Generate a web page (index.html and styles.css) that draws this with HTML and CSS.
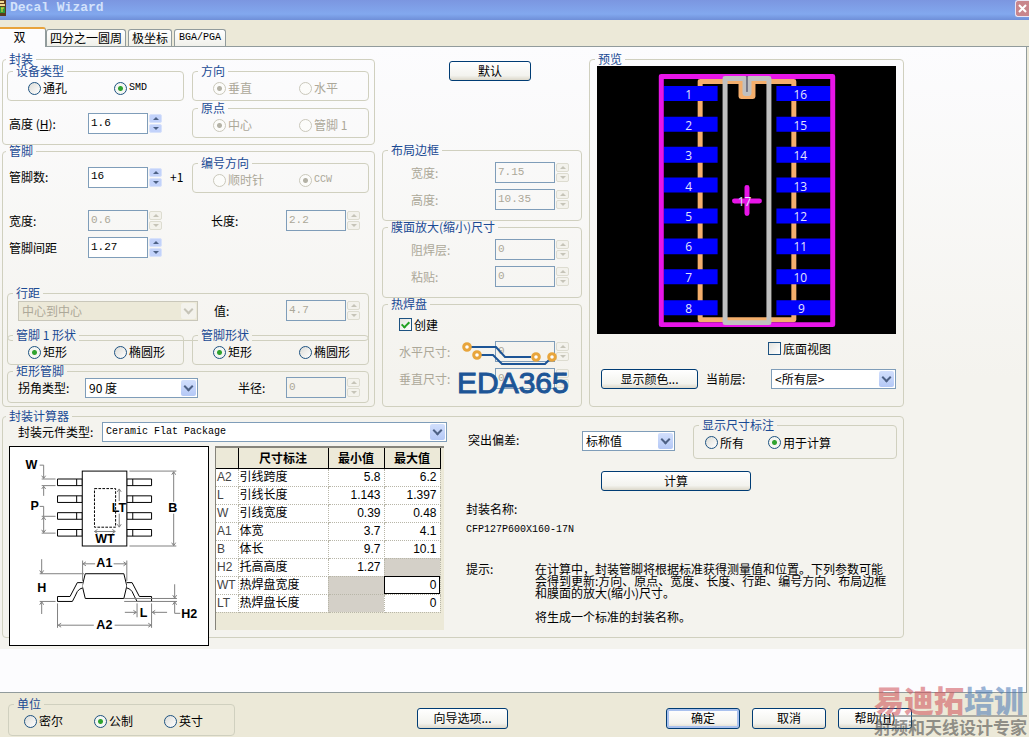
FILE: index.html
```
<!DOCTYPE html>
<html lang="zh-CN">
<head>
    <meta charset="UTF-8">
    <meta name="viewport" content="width=device-width, initial-scale=1">
    <title>Decal Wizard</title>
    <link rel="stylesheet" href="styles.css">
</head>
<body>
    <header class="titlebar">
        <svg class="app-icon" width="6" height="16" viewBox="0 0 6 16">
            <rect width="6" height="16" fill="#5b3a1c"/>
            <path d="M0 2h4M0 5h5" stroke="#f0d890" stroke-width="2"/>
            <rect y="7" width="5" height="6" fill="#2e9a3c"/>
            <path d="M1 8h3M2 8v4" stroke="#e8e040"/>
        </svg>
        <h1>Decal Wizard</h1>
        <button class="close" aria-label="关闭">
            <svg width="9" height="9" viewBox="0 0 9 9"><path d="M1 1L8 8M8 1L1 8" stroke="#fff" stroke-width="2"/></svg>
        </button>
    </header>

    <nav class="tabs" role="tablist">
        <button class="tab active" role="tab" aria-selected="true">双</button>
        <button class="tab" role="tab">四分之一圆周</button>
        <button class="tab" role="tab">极坐标</button>
        <button class="tab latin" role="tab">BGA/PGA</button>
    </nav>

    <main class="sheet">
        <div class="content">
            <div class="columns">
                <div class="col-left">
                    <fieldset class="outer package">
                        <legend>封装</legend>
                        <div class="halves">
                            <div>
                                <fieldset class="radios">
                                    <legend>设备类型</legend>
                                    <div class="options">
                                        <label><input type="radio" name="device">通孔</label>
                                        <label class="latin"><input type="radio" name="device" checked>SMD</label>
                                    </div>
                                </fieldset>
                                <div class="field height-row">
                                    <label for="height">高度 (<u>H</u>):</label>
                                    <span class="spin"><input type="text" id="height" value="1.6"><span class="arrows"><button class="up" aria-label="增加"></button><button class="down" aria-label="减少"></button></span></span>
                                </div>
                            </div>
                            <div class="stack">
                                <fieldset class="radios" disabled>
                                    <legend>方向</legend>
                                    <div class="options">
                                        <label><input type="radio" name="orient" checked>垂直</label>
                                        <label><input type="radio" name="orient">水平</label>
                                    </div>
                                </fieldset>
                                <fieldset class="radios" disabled>
                                    <legend>原点</legend>
                                    <div class="options">
                                        <label><input type="radio" name="origin" checked>中心</label>
                                        <label><input type="radio" name="origin">管脚 1</label>
                                    </div>
                                </fieldset>
                            </div>
                        </div>
                    </fieldset>

                    <fieldset class="outer pins">
                        <legend>管脚</legend>
                        <div class="halves">
                            <div class="field pin-count">
                                <label for="pins">管脚数:</label>
                                <span class="spin"><input type="text" id="pins" value="16"><span class="arrows"><button class="up" aria-label="增加"></button><button class="down" aria-label="减少"></button></span></span>
                                <span class="plus">+1</span>
                            </div>
                            <fieldset class="radios" disabled>
                                <legend>编号方向</legend>
                                <div class="options">
                                    <label><input type="radio" name="numbering">顺时针</label>
                                    <label class="latin"><input type="radio" name="numbering" checked>CCW</label>
                                </div>
                            </fieldset>
                        </div>
                        <div class="halves size-row">
                            <div class="field">
                                <label for="pin-width">宽度:</label>
                                <span class="spin"><input type="text" id="pin-width" value="0.6" disabled><span class="arrows"><button class="up" aria-label="增加" disabled></button><button class="down" aria-label="减少" disabled></button></span></span>
                            </div>
                            <div class="field second">
                                <label for="pin-length">长度:</label>
                                <span class="spin"><input type="text" id="pin-length" value="2.2" disabled><span class="arrows"><button class="up" aria-label="增加" disabled></button><button class="down" aria-label="减少" disabled></button></span></span>
                            </div>
                        </div>
                        <div class="field pitch-row">
                            <label for="pitch">管脚间距</label>
                            <span class="spin"><input type="text" id="pitch" value="1.27"><span class="arrows"><button class="up" aria-label="增加"></button><button class="down" aria-label="减少"></button></span></span>
                        </div>

                        <fieldset class="row-pitch">
                            <legend>行距</legend>
                            <div class="line">
                                <span class="combo off"><select aria-label="行距" disabled><option>中心到中心</option></select></span>
                                <label for="row-value">值:</label>
                                <span class="spin"><input type="text" id="row-value" value="4.7" disabled><span class="arrows"><button class="up" aria-label="增加" disabled></button><button class="down" aria-label="减少" disabled></button></span></span>
                            </div>
                        </fieldset>

                        <div class="halves shapes">
                            <fieldset class="radios">
                                <legend>管脚 1 形状</legend>
                                <div class="options">
                                    <label><input type="radio" name="shape1" checked>矩形</label>
                                    <label><input type="radio" name="shape1">椭圆形</label>
                                </div>
                            </fieldset>
                            <fieldset class="radios">
                                <legend>管脚形状</legend>
                                <div class="options">
                                    <label><input type="radio" name="shape" checked>矩形</label>
                                    <label><input type="radio" name="shape">椭圆形</label>
                                </div>
                            </fieldset>
                        </div>

                        <fieldset class="rect-pins">
                            <legend>矩形管脚</legend>
                            <div class="line">
                                <label for="corner">拐角类型:</label>
                                <span class="combo"><select id="corner"><option>90 度</option></select></span>
                                <label for="radius" class="radius">半径:</label>
                                <span class="spin"><input type="text" id="radius" value="0" disabled><span class="arrows"><button class="up" aria-label="增加" disabled></button><button class="down" aria-label="减少" disabled></button></span></span>
                            </div>
                        </fieldset>
                    </fieldset>
                </div>

                <div class="col-mid">
                    <button class="btn default">默认</button>
                    <fieldset class="dims" disabled>
                        <legend>布局边框</legend>
                        <div class="field">
                            <label for="court-w">宽度:</label>
                            <span class="spin"><input type="text" id="court-w" value="7.15"><span class="arrows"><button class="up" aria-label="增加"></button><button class="down" aria-label="减少"></button></span></span>
                        </div>
                        <div class="field">
                            <label for="court-h">高度:</label>
                            <span class="spin"><input type="text" id="court-h" value="10.35"><span class="arrows"><button class="up" aria-label="增加"></button><button class="down" aria-label="减少"></button></span></span>
                        </div>
                    </fieldset>
                    <fieldset class="dims" disabled>
                        <legend>膜面放大(缩小)尺寸</legend>
                        <div class="field">
                            <label for="solder">阻焊层:</label>
                            <span class="spin"><input type="text" id="solder" value="0"><span class="arrows"><button class="up" aria-label="增加"></button><button class="down" aria-label="减少"></button></span></span>
                        </div>
                        <div class="field">
                            <label for="paste">粘贴:</label>
                            <span class="spin"><input type="text" id="paste" value="0"><span class="arrows"><button class="up" aria-label="增加"></button><button class="down" aria-label="减少"></button></span></span>
                        </div>
                    </fieldset>
                    <fieldset class="dims thermal">
                        <legend>热焊盘</legend>
                        <label class="check"><input type="checkbox" checked>创建</label>
                        <div class="field off">
                            <label for="th-x">水平尺寸:</label>
                            <span class="spin"><input type="text" id="th-x" value="0" disabled><span class="arrows"><button class="up" aria-label="增加" disabled></button><button class="down" aria-label="减少" disabled></button></span></span>
                        </div>
                        <div class="field off">
                            <label for="th-y">垂直尺寸:</label>
                            <span class="spin"><input type="text" id="th-y" value="0" disabled><span class="arrows"><button class="up" aria-label="增加" disabled></button><button class="down" aria-label="减少" disabled></button></span></span>
                        </div>
                        <div class="eda-logo">
                            <svg width="112" height="26" viewBox="0 0 112 26">
                                <g fill="none" stroke="#1d5596" stroke-width="2">
                                    <path d="M14 6H39L48 16H74"/>
                                    <path d="M24 14H36L45 23H88L94 17"/>
                                </g>
                                <g fill="#fff" stroke="#e8a53c" stroke-width="3">
                                    <circle cx="10" cy="6" r="3.300"/>
                                    <circle cx="20" cy="14" r="3.300"/>
                                    <circle cx="79" cy="16" r="3.300"/>
                                    <circle cx="95" cy="16" r="3.300"/>
                                </g>
                            </svg>
                            <span>EDA365</span>
                        </div>
                    </fieldset>
                </div>

                <fieldset class="preview">
                    <legend>预览</legend>
                    <svg class="board" viewBox="597 66 300 269">
                        <rect x="597" y="66" width="300" height="269" fill="#000"/>
                        <g fill="none" stroke="#f4ae6c" stroke-width="5" stroke-linejoin="round">
                            <path d="M700.500 81.500H741.500V96.500H753.500V81.500H794.500V320.500H700.500Z"/>
                        </g>
                        <g fill="#0000fe">
                            <path d="M664 86h54v15h-54zM664 117h54v15h-54zM664 147h54v16h-54zM664 178h54v15h-54zM664 209h54v15h-54zM664 239h54v16h-54zM664 270h54v15h-54zM664 301h54v15h-54z"/>
                            <path d="M777 86h54v15h-54zM777 117h54v15h-54zM777 147h54v16h-54zM777 178h54v15h-54zM777 209h54v15h-54zM777 239h54v16h-54zM777 270h54v15h-54zM777 301h54v15h-54z"/>
                        </g>
                        <rect x="661.500" y="76.500" width="172" height="249" fill="none" stroke="#e815e8" stroke-width="5" stroke-linejoin="round"/>
                        <path d="M745.500 78.500H725.500V323.500H769.500V78.500H749.500V93.500H745.500Z" fill="none" stroke="#c0c0c0" stroke-width="5" stroke-linejoin="round"/>
                        <path d="M747.500 76V92" stroke="#33334c"/>
                        <path d="M747.500 188V214M735 201.500H760" stroke="#e815e8" stroke-width="5" stroke-linecap="round"/>
                        <g class="pin-no">
                            <text x="689" y="99">1</text><text x="689" y="130">2</text>
                            <text x="689" y="160">3</text><text x="689" y="191">4</text>
                            <text x="689" y="222">5</text><text x="689" y="252">6</text>
                            <text x="689" y="283">7</text><text x="689" y="314">8</text>
                            <text x="802" y="314">9</text><text x="801" y="283">10</text>
                            <text x="801" y="252">11</text><text x="801" y="222">12</text>
                            <text x="801" y="191">13</text><text x="801" y="160">14</text>
                            <text x="801" y="130">15</text><text x="801" y="99">16</text>
                            <text x="745" y="206">17</text>
                        </g>
                    </svg>
                    <label class="check bottom-view"><input type="checkbox">底面视图</label>
                    <div class="line layer-row">
                        <button class="btn">显示颜色...</button>
                        <label for="layer">当前层:</label>
                        <span class="combo"><select id="layer"><option>&lt;所有层&gt;</option></select></span>
                    </div>
                </fieldset>
            </div>

            <fieldset class="outer calc">
                <legend>封装计算器</legend>
                <div class="calc-grid">
                    <div>
                        <div class="line type-row">
                            <label for="part">封装元件类型:</label>
                            <span class="combo latin"><select id="part"><option>Ceramic Flat Package</option></select></span>
                        </div>
                        <div class="figures">
                            <svg class="drawing" viewBox="28 124 600 600">
                                <g fill="#fff" stroke="#000" stroke-width="3">
                                    <path d="M172 221h75v20h-75zM172 272h75v20h-75zM172 323h75v20h-75zM172 374h75v20h-75z"/>
                                    <path d="M382 221h75v20h-75zM382 272h75v20h-75zM382 323h75v20h-75zM382 374h75v20h-75z"/>
                                    <path d="M230 221v20M230 272v20M230 323v20M230 374v20M400 221v20M400 272v20M400 323v20M400 374v20"/>
                                    <rect x="247" y="197" width="135" height="227"/>
                                    <rect x="284" y="250" width="64" height="117" stroke-dasharray="8 4"/>
                                    <path d="M256 508H373L382 545L373 583H256L247 545Z"/>
                                    <path d="M248 535H232L210 577H172V592H217Q226 575 232 562Q238 553 248 551"/>
                                    <path d="M382 535H398L420 577H457V592H413Q404 575 398 562Q392 553 382 551"/>
                                </g>
                                <g fill="none" stroke="#808080" stroke-width="3">
                                    <path d="M118 179H130V219M124 211l6 8 6-8M124 221H166M124 241H166M130 272V243M124 251l6-8 6 8"/>
                                    <path d="M118 304H130V334M124 334H166M124 385H166M130 336V383M124 345l6-9 6 9M124 375l6 9 6-9"/>
                                    <path d="M390 197H532M390 424H532M524 200V290M524 326V422M518 208l6-9 6 9M518 414l6 9 6-9"/>
                                    <path d="M359 252V288M359 326V366M353 260l6-9 6 9M353 358l6 9 6-9"/>
                                    <path d="M284 380H347M293 374l-9 6 9 6M338 374l9 6-9 6"/>
                                    <path d="M248 468V530M382 468V530M250 478H286M342 478H380M258 472l-9 6 9 6M372 472l9 6-9 6"/>
                                    <path d="M118 508H252M118 592H166M124 464V506M118 498l6 9 6-9M124 630V594M118 602l6-9 6 9"/>
                                    <path d="M172 598V672M457 598V672M174 664H282M345 664H456M183 658l-9 6 9 6M447 658l9 6-9 6"/>
                                    <path d="M413 598V640M376 625H411M402 619l9 6-9 6M504 625H459M468 619l-9 6 9 6"/>
                                    <path d="M374 583H534M374 592H534M527 540V581M521 573l6 9 6-9M544 628H527V594M521 602l6-9 6 9"/>
                                </g>
                                <g class="dim">
                                    <text x="93" y="191">W</text><text x="103" y="314">P</text>
                                    <text x="521" y="320">B</text><text x="358" y="320">LT</text>
                                    <text x="316" y="416">WT</text><text x="314" y="489">A1</text>
                                    <text x="124" y="563">H</text><text x="433" y="640">L</text>
                                    <text x="314" y="676">A2</text><text x="571" y="641">H2</text>
                                </g>
                            </svg>
                            <div class="grid-box">
                                <table>
                                    <thead>
                                        <tr><th class="code"></th><th class="name">尺寸标注</th><th>最小值</th><th>最大值</th></tr>
                                    </thead>
                                    <tbody>
                                        <tr><td>A2</td><td>引线跨度</td><td>5.8</td><td>6.2</td></tr>
                                        <tr><td>L</td><td>引线长度</td><td>1.143</td><td>1.397</td></tr>
                                        <tr><td>W</td><td>引线宽度</td><td>0.39</td><td>0.48</td></tr>
                                        <tr><td>A1</td><td>体宽</td><td>3.7</td><td>4.1</td></tr>
                                        <tr><td>B</td><td>体长</td><td>9.7</td><td>10.1</td></tr>
                                        <tr><td>H2</td><td>托高高度</td><td>1.27</td><td class="na"></td></tr>
                                        <tr><td>WT</td><td>热焊盘宽度</td><td class="na"></td><td class="current">0</td></tr>
                                        <tr><td>LT</td><td>热焊盘长度</td><td class="na"></td><td>0</td></tr>
                                    </tbody>
                                </table>
                            </div>
                        </div>
                    </div>

                    <div class="result">
                        <div class="line">
                            <label for="protrusion">突出偏差:</label>
                            <span class="combo"><select id="protrusion"><option>标称值</option></select></span>
                            <fieldset class="radios show-dims">
                                <legend>显示尺寸标注</legend>
                                <div class="options">
                                    <label><input type="radio" name="show">所有</label>
                                    <label><input type="radio" name="show" checked>用于计算</label>
                                </div>
                            </fieldset>
                        </div>
                        <button class="btn calculate">计算</button>
                        <p class="name-label">封装名称:</p>
                        <p class="latin package-name">CFP127P600X160-17N</p>
                        <div class="hint">
                            <span>提示:</span>
                            <div>
                                <p>在计算中，封装管脚将根据标准获得测量值和位置。下列参数可能<br>会得到更新:方向、原点、宽度、长度、行距、编号方向、布局边框<br>和膜面的放大(缩小)尺寸。</p>
                                <p>将生成一个标准的封装名称。</p>
                            </div>
                        </div>
                    </div>
                </div>
            </fieldset>
        </div>
    </main>

    <footer class="footer">
        <fieldset class="radios units">
            <legend>单位</legend>
            <div class="options">
                <label><input type="radio" name="unit">密尔</label>
                <label><input type="radio" name="unit" checked>公制</label>
                <label><input type="radio" name="unit">英寸</label>
            </div>
        </fieldset>
        <button class="btn wizard">向导选项...</button>
        <div class="actions">
            <button class="btn primary">确定</button>
            <button class="btn">取消</button>
            <button class="btn">帮助(<u>H</u>)</button>
        </div>
        <div class="watermark">
            <p class="brand"><span>易迪拓</span>培训</p>
            <p class="slogan">射频和天线设计专家</p>
        </div>
    </footer>
</body>
</html>
```
FILE: styles.css
```
*, *::before, *::after {
    box-sizing: border-box;
}
body {
    display: flex;
    flex-direction: column;
    min-height: 100vh;
    margin: 0;
    background-color: #ece9d8;
    color: #000;
    font: 12px/12px "Noto Sans CJK SC", sans-serif;
    white-space: nowrap;
}
p, h1 {
    margin: 0;
}
button, input, select {
    margin: 0;
    padding: 0;
    color: inherit;
    font: inherit;
}
.latin {
    font-family: "Liberation Mono", monospace;
    font-size: 10px;
}

/* title bar and tabs */
.titlebar {
    display: flex;
    align-items: center;
    height: 20px;
    background: linear-gradient(#7b96e0, #82a8ee 70%, #6f8fd8);
}
.titlebar h1 {
    margin-left: 4px;
    padding-bottom: 5px;
    color: #d3e2fb;
    font: bold 13px/14px "Liberation Mono", monospace;
}
.app-icon {
    margin-bottom: 5px;
}
.close {
    display: grid;
    place-items: center;
    width: 14px;
    height: 17px;
    margin: 0 0 3px auto;
    border: 1px solid #e8e4f4;
    border-right: 0;
    border-radius: 3px 0 0 3px;
    background-color: #c8858c;
}
.tabs {
    display: flex;
    align-items: flex-end;
    height: 27px;
    border-bottom: 1px solid #919b9c;
}
.tab {
    height: 17px;
    margin-right: 2px;
    padding: 0 3px;
    border: 1px solid #919b9c;
    border-bottom: 0;
    border-radius: 3px 3px 0 0;
    background: linear-gradient(#fff, #f0f0ea);
}
.tab.latin {
    padding: 0 4px;
}
.tab.active {
    width: 46px;
    height: 20px;
    margin: 0 0 -1px;
    padding: 0 6px 3px 0;
    border-top: 2px solid #e8a33c;
    border-left: 0;
    border-radius: 0 3px 0 0;
    background: #fcfcfe;
}

/* page */
.sheet {
    flex: 1;
    margin-right: 2px;
    border-right: 1px solid #919b9c;
    border-bottom: 1px solid #919b9c;
    background-color: #fcfcfe;
}
.content {
    padding: 6px 122px 11px 2px;
    background: linear-gradient(#fcfcfe, #f4f3ee 55%);
}
.columns {
    display: grid;
    grid-template-columns: 373fr 200fr 315fr;
    gap: 7px;
}
fieldset {
    min-width: 0;
    margin: 0;
    padding: 0;
    border: 1px solid #d0d0bf;
    border-radius: 4px;
}
legend {
    height: 12px;
    margin-left: 5px;
    padding: 0 3px;
    color: #1a4a94;
}
fieldset:disabled, .off {
    color: #aca899;
}
fieldset:disabled legend {
    color: #1a4a94;
}
.outer {
    padding: 0 5px 0 4px;
}
.outer > legend {
    margin-left: -1px;
}
.package {
    height: 92px;
}
.pins {
    height: 262px;
}
.halves {
    display: grid;
    grid-template-columns: repeat(2, minmax(0, 1fr));
    gap: 8px;
}
.stack {
    display: grid;
    align-content: start;
    gap: 1px;
}

/* option groups */
.radios {
    height: 36px;
}
.options {
    display: flex;
    align-items: center;
    height: 22px;
    padding-left: 20px;
}
.options label {
    display: flex;
    flex: none;
    align-items: center;
    gap: 2px;
    width: 86px;
}
.options label:last-child {
    width: auto;
}
input[type="radio"] {
    flex: none;
    appearance: none;
    width: 13px;
    height: 13px;
    border: 1px solid #1d5281;
    border-radius: 50%;
    background: linear-gradient(135deg, #dcdcd7, #fff);
}
input[type="radio"]:checked {
    background: radial-gradient(circle, #2fa32f 0, #2fa32f 2px, #f4f6f2 3px);
}
input[type="radio"]:disabled {
    border-color: #cac8bb;
    background: #fcfcfa;
}
input[type="radio"]:disabled:checked {
    background: radial-gradient(circle, #b4b2a6 0, #b4b2a6 2px, #fcfcfa 3px);
}
.check {
    display: flex;
    align-items: center;
    gap: 2px;
}
input[type="checkbox"] {
    display: grid;
    place-items: center;
    appearance: none;
    width: 13px;
    height: 13px;
    border: 1px solid #1d5281;
    background: linear-gradient(135deg, #e4e4df, #fff);
}
input[type="checkbox"]:checked::after {
    content: "";
    width: 5px;
    height: 8px;
    margin-bottom: 2px;
    border: solid #21a121;
    border-width: 0 2px 2px 0;
    transform: rotate(45deg);
}

/* fields */
.field, .line {
    display: flex;
    align-items: center;
}
.field {
    height: 21px;
    padding-left: 2px;
}
.field label {
    flex: none;
    width: 79px;
}
.spin {
    display: flex;
    gap: 1px;
}
.spin input {
    width: 60px;
    height: 21px;
    padding: 0 2px 2px;
    border: 1px solid #7f9db9;
    border-radius: 0;
    background-color: #fff;
    font: 11px/12px "Liberation Mono", monospace;
}
.spin input:disabled {
    background-color: transparent;
    color: #aca899;
}
.arrows {
    display: grid;
    gap: 1px;
    padding: 1px 0;
}
.arrows button {
    display: grid;
    place-items: center;
    width: 13px;
    height: 9px;
    border: 1px solid #d8e2fa;
    border-radius: 2px;
    background-color: #c2d2fa;
    color: #4d6185;
}
.arrows button:disabled {
    border-color: #dddcd0;
    background-color: #f3f2ec;
    color: #c6c4b8;
}
.arrows button::after {
    content: "";
    border: solid transparent;
    border-width: 0 3px 3px;
    border-bottom-color: currentColor;
}
.arrows .down::after {
    border-width: 3px 3px 0;
    border-top-color: currentColor;
}
.combo {
    display: flex;
    flex: none;
    position: relative;
}
.combo select {
    appearance: none;
    width: 100%;
    height: 20px;
    padding: 0 18px 0 3px;
    border: 1px solid #7f9db9;
    border-radius: 0;
    background-color: #fff;
}
.combo::before {
    content: "";
    position: absolute;
    top: 2px;
    right: 2px;
    width: 15px;
    height: 16px;
    border-radius: 2px;
    background: linear-gradient(#d2dffc, #b4c8f6);
    pointer-events: none;
}
.combo::after {
    content: "";
    position: absolute;
    top: 5px;
    right: 6px;
    width: 7px;
    height: 7px;
    border: solid #4d6185;
    border-width: 0 2px 2px 0;
    transform: rotate(45deg);
    pointer-events: none;
}
.combo.off select {
    border-color: #c9c7ba;
    background-color: #ece9d8;
    color: #aca899;
    opacity: 1;
}
.combo.off::before {
    background: #f3f2ec;
}
.combo.off::after {
    border-color: #c6c4b8;
}
.btn {
    height: 20px;
    padding: 0 4px 1px;
    border: 1px solid #003c74;
    border-radius: 3px;
    background: linear-gradient(#fff, #f3f3ee 75%, #dcd8ca);
}

/* left column */
.height-row {
    height: 45px;
}
.pin-count {
    height: 40px;
}
.plus {
    margin-left: 8px;
}
.size-row {
    margin-top: 13px;
}
.second {
    padding-left: 19px;
}
.second label {
    width: 75px;
}
.pitch-row {
    margin-top: 6px;
}
.row-pitch {
    height: 54px;
    margin-top: 29px;
}
.row-pitch .line {
    padding: 1px 0 0 10px;
}
.row-pitch .combo {
    width: 180px;
}
.row-pitch label {
    margin-left: 16px;
}
.row-pitch .spin, .rect-pins .spin {
    margin-left: auto;
    margin-right: 8px;
}
.shapes {
    margin-top: -12px;
}
.shapes legend {
    background-color: #f4f3ee;
}
.rect-pins {
    height: 38px;
}
.rect-pins .line {
    padding-left: 10px;
}
.rect-pins label {
    width: 67px;
}
.rect-pins .combo {
    width: 113px;
}
.rect-pins .radius {
    width: auto;
    margin-left: 40px;
}

/* middle column */
.col-mid {
    display: flex;
    flex-direction: column;
}
.default {
    width: 82px;
    margin: 8px 0 63px 67px;
}
.dims {
    height: 77px;
}
.dims .field {
    margin-top: 6px;
    padding-left: 28px;
}
.dims .field label {
    width: 84px;
}
.thermal {
    position: relative;
    flex: 1;
}
.thermal .check {
    margin: 8px 0 10px 16px;
}
.thermal .field {
    padding-left: 16px;
}
.thermal .field label {
    width: 96px;
}
.eda-logo {
    position: absolute;
    right: 12px;
    bottom: 7px;
    width: 112px;
    color: #1d5596;
    font: 30px/32px "Liberation Sans", sans-serif;
    -webkit-text-stroke: 1px #1d5596;
}
.eda-logo svg, .eda-logo span {
    display: block;
}

/* preview */
.preview {
    padding: 1px 7px 0;
}
.preview > legend {
    margin-left: -2px;
}
.board {
    display: block;
    width: 100%;
}
.pin-no {
    fill: #e4e4ff;
    font: 12px "Open Sans", sans-serif;
    text-anchor: middle;
}
.bottom-view {
    margin: 8px 0 14px 171px;
}
.layer-row .btn {
    width: 97px;
    margin-left: 4px;
}
.layer-row label {
    margin: 0 auto 0 8px;
}
.layer-row .combo {
    width: 125px;
}

/* calculator */
.calc {
    height: 228px;
    margin-top: 3px;
    padding: 0 6px;
}
.calc > legend {
    margin-left: -3px;
}
.calc-grid {
    display: grid;
    grid-template-columns: 438fr 431fr;
    gap: 19px;
}
.type-row label {
    width: 84px;
    margin-left: 9px;
}
.type-row .combo {
    flex: 1;
}
.figures {
    display: flex;
    gap: 6px;
    margin-top: 4px;
}
.drawing {
    width: 200px;
    height: 200px;
    border: 1px solid #000;
    background-color: #fff;
}
.dim {
    font: bold 38px "Liberation Sans", sans-serif;
    text-anchor: middle;
}
.grid-box {
    width: 229px;
    height: 184px;
    border: 1px solid #85837a;
    border-width: 2px 0 0 1px;
    background-color: #ece9d8;
}
table {
    width: 224px;
    border-collapse: collapse;
    table-layout: fixed;
}
th {
    width: 56px;
    height: 20px;
    padding: 0;
    border-right: 1px solid #000;
    border-bottom: 1px solid #000;
}
.code {
    width: 22px;
}
.name {
    width: 90px;
}
td {
    height: 18px;
    padding: 0 3px;
    border-right: 1px dotted #b8b6a8;
    border-bottom: 1px dotted #b8b6a8;
    background-color: #fff;
    font-family: "Liberation Sans", "Noto Sans CJK SC", sans-serif;
    text-align: right;
}
td:first-child {
    padding: 0 1px;
    color: #444;
    text-align: left;
}
td:nth-child(2) {
    padding: 0 1px;
    text-align: left;
}
.na {
    background-color: #d4d0c8;
}
.current {
    outline: 1px solid #000;
    outline-offset: -1px;
}
.result .line {
    align-items: flex-start;
    margin-top: -3px;
}
.result .line > label {
    flex: none;
    width: 116px;
    padding: 15px 0 0 2px;
}
.result .combo {
    width: 93px;
    margin: 12px 18px 0 0;
}
.show-dims {
    flex: 1;
    height: 40px;
}
.show-dims .options {
    padding: 1px 0 0 11px;
}
.show-dims .options label:first-child {
    width: 63px;
}
.calculate {
    display: block;
    width: 150px;
    margin: 12px 0 12px 135px;
}
.name-label, .package-name {
    margin-bottom: 9px;
}
.hint {
    display: flex;
    margin-top: 27px;
}
.hint span {
    width: 69px;
}
.hint p {
    margin-bottom: 12px;
}

/* footer */
.footer {
    display: flex;
    position: relative;
    align-items: flex-start;
    height: 44px;
    padding: 5px 117px 0 8px;
}
.units {
    width: 227px;
    height: 38px;
}
.units .options {
    padding-left: 15px;
}
.units .options label {
    width: 70px;
}
.footer .btn {
    height: 21px;
    margin-top: 10px;
}
.wizard {
    width: 91px;
    margin-left: 182px;
}
.actions {
    display: flex;
    gap: 12px;
    margin-left: auto;
}
.actions .btn {
    width: 74px;
}
.actions .primary {
    box-shadow: inset 0 0 0 2px #a9c1ee;
}
.watermark {
    position: absolute;
    right: 2px;
    bottom: 0;
    opacity: 0.55;
    pointer-events: none;
}
.brand {
    border-bottom: 2px solid #777;
    color: #4a78b4;
    font-size: 30px;
    font-weight: 900;
    line-height: 32px;
}
.brand span {
    color: #d05058;
}
.slogan {
    color: #444;
    font-size: 17px;
    font-weight: bold;
    line-height: 20px;
}
```
